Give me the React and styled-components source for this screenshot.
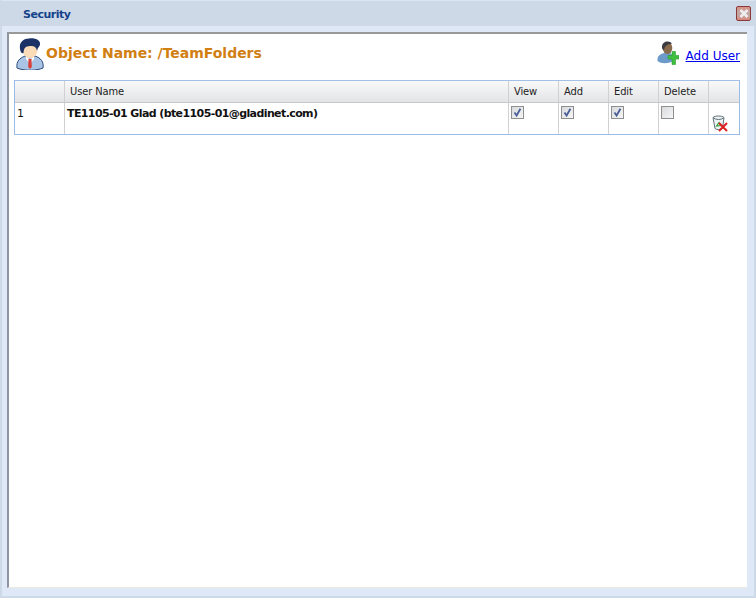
import React from "react";
import styled, { createGlobalStyle } from "styled-components";

const GlobalStyle = createGlobalStyle`
  html, body {
    margin: 0;
    padding: 0;
    background: #fff;
  }
`;

const Win = styled.div`
  width: 756px;
  height: 598px;
  box-sizing: border-box;
  display: flex;
  flex-direction: column;
  background: #dfe8f6;
  border-top: 1px solid #dbe4ef;
  border-left: 2px solid #cdd9e6;
  border-right: 2px solid #cdd9e6;
  border-bottom: 2px solid #cdd9e6;
  overflow: hidden;
`;

const TitleBar = styled.div`
  height: 25px;
  margin: 0 -2px;
  padding: 0 5px 0 23px;
  flex-shrink: 0;
  display: flex;
  align-items: center;
  justify-content: space-between;
  background: #cdd9e7;
`;

const Title = styled.span`
  font: bold 11px "DejaVu Sans", Verdana, sans-serif;
  letter-spacing: -0.5px;
  color: #15428b;
  position: relative;
  top: 1px;
`;

const CloseBtn = styled.button`
  width: 15px;
  height: 15px;
  padding: 0;
  border: 1px solid #8a3a3a;
  border-radius: 2px;
  background: linear-gradient(#dc8f82, #c3a6a2 35%, #c3a6a2 65%, #d8867a);
  display: flex;
  align-items: center;
  justify-content: center;
`;

const Body = styled.div`
  flex: 1;
  margin: 6px 7px 8px 5px;
  background: #fff;
  border-top: 2px solid #999;
  border-left: 2px solid #8f95a0;
  border-bottom: 1px solid #ece9e0;
  padding: 0 6px 0 5px;
  display: flex;
  flex-direction: column;
`;

const Head = styled.div`
  height: 46px;
  display: flex;
  align-items: flex-start;
  justify-content: space-between;
`;

const NameBox = styled.div`
  display: flex;
  align-items: center;
  gap: 2px;
  padding: 4px 0 0 2px;
`;

const ObjectName = styled.h1`
  margin: 0;
  font: bold 14px "DejaVu Sans", Verdana, sans-serif;
  letter-spacing: -0.02px;
  color: #d17f13;
  position: relative;
  top: -1px;
`;

const AddBox = styled.div`
  display: flex;
  align-items: flex-end;
  gap: 7px;
  padding-top: 7px;
  margin-right: 1px;
`;

const AddLink = styled.a`
  margin-bottom: 2px;
  font: 12px "DejaVu Sans", Verdana, sans-serif;
  color: #0000ee;
  text-decoration: underline;
`;

const Table = styled.table`
  width: 726px;
  table-layout: fixed;
  border-collapse: separate;
  border-spacing: 0;
  border: 1px solid #99bbe8;
  border-top-color: #a3c0e6;
`;

const Th = styled.th`
  height: 22px;
  padding: 0 0 0 5px;
  box-sizing: border-box;
  text-align: left;
  font: normal 11px "DejaVu Sans Condensed", "DejaVu Sans", sans-serif;
  letter-spacing: -0.1px;
  color: #222;
  border-right: 1px solid #d0d0d0;
  border-bottom: 1px solid #c8c8c8;
  background: linear-gradient(#f9f9f9, #e3e4e6);
  &:last-child {
    border-right: none;
  }
`;

const Td = styled.td`
  height: 31px;
  padding: ${(p) => (p.$icon ? "12px 0 0 3px" : p.$check ? "3px 0 0 2px" : "4px 0 0 2px")};
  box-sizing: border-box;
  vertical-align: top;
  border-right: 1px solid #d0d0d0;
  color: #111;
  font: ${(p) => (p.$bold ? "bold 11px" : "11px")} "DejaVu Sans", Verdana, sans-serif;
  letter-spacing: ${(p) => (p.$bold ? "-0.6px" : "0")};
  svg {
    display: block;
  }
  &:last-child {
    border-right: none;
  }
`;

const Box = styled.span`
  display: block;
  width: 11px;
  height: 11px;
  border: 1px solid #8e8f8f;
  background: linear-gradient(135deg, #d9dadd, #f6f6f6);
`;

const Check = ({ on }) => (
  <Box>
    {on && (
      <svg width="11" height="11" viewBox="0 0 11 11">
        <path d="M2.5 5.5 L4.6 8.5 L8.4 1.8" fill="none" stroke="#4a5f97" strokeWidth="1.8" />
      </svg>
    )}
  </Box>
);

const CloseIcon = () => (
  <svg width="10" height="9" viewBox="0 0 10 9">
    <path d="M1.5 1 L8.5 8 M8.5 1 L1.5 8" stroke="#eeeeee" strokeWidth="2.6" />
  </svg>
);

const PersonIcon = () => (
  <svg width="28" height="32" viewBox="0 0 28 32">
    <path d="M1 30 C0 23 4 20 9 18 L19 18 C25 20 28 24 27 30 C20 33 8 33 1 30Z" fill="#a9c4e4" stroke="#2b4a7d" strokeWidth="1" />
    <path d="M10 18 L14 22 L18 18 L18 21 L14 26 L10 21Z" fill="#fff" />
    <path d="M12.5 21 L15.5 21 L15.8 29 L14 31 L12.2 29Z" fill="#d8403a" />
    <ellipse cx="14" cy="12" rx="7.5" ry="8" fill="#fbdcb8" />
    <path d="M4.5 13 C2 5 7 0.5 13 0.5 C20 -0.5 26 3 23.5 8 C22.5 9.5 21.5 10 21 13 C20.5 9 18 7.5 14 8 C10 8.5 8 9 7.5 15 C6.5 15.5 5 15 4.5 13Z" fill="#1c3266" />
  </svg>
);

const AddUserIcon = () => (
  <svg width="22" height="24" viewBox="0 0 22 24">
    <path d="M0.5 20 C0 15 3 13 7 12 L13 12 C15 13 16 15 16 20 C11 23 4 23 0.5 20Z" fill="#6d9bc9" />
    <ellipse cx="10.5" cy="7" rx="4.8" ry="6" fill="#8a6a4c" />
    <path d="M5 7 C4.5 2 8 0.5 10.5 0.5 C13 0.5 15 1.5 14.5 3 C11 3 8 4 7 9 C6 9 5.5 8 5 7Z" fill="#3a3a40" />
    <path d="M11 14.5 H15 V10.5 H18.5 V14.5 H22 V18 H18.5 V23.5 H15 V18 H11Z" fill="#3fbf3f" stroke="#2c9c33" strokeWidth="0.6" />
  </svg>
);

const DeleteIcon = () => (
  <svg width="16" height="17" viewBox="0 0 16 17">
    <path d="M1 2.5 C3 0.5 10 0.5 12 2.5 L10.5 13.5 C8 15 5 15 3 13.5Z" fill="#eef3f5" stroke="#5f7078" strokeWidth="1" />
    <path d="M1.5 3 C4 5 9 5 11.5 3" fill="none" stroke="#5f7078" strokeWidth="1" />
    <path d="M4.5 11 L7 7.5 L9 10.5Z" fill="none" stroke="#2fa53a" strokeWidth="1.2" />
    <path d="M7 8 L15 16 M15 8 L7 16" stroke="#dd2020" strokeWidth="2" />
  </svg>
);

const columns = [
  { label: "", width: 50 },
  { label: "User Name", width: 444 },
  { label: "View", width: 50 },
  { label: "Add", width: 50 },
  { label: "Edit", width: 50 },
  { label: "Delete", width: 50 },
  { label: "", width: 30 },
];

const App = () => {
  return (
    <Win>
      <GlobalStyle />
      <TitleBar>
        <Title>Security</Title>
        <CloseBtn>
          <CloseIcon />
        </CloseBtn>
      </TitleBar>
      <Body>
        <Head>
          <NameBox>
            <PersonIcon />
            <ObjectName>Object Name: /TeamFolders</ObjectName>
          </NameBox>
          <AddBox>
            <AddUserIcon />
            <AddLink href="#">Add User</AddLink>
          </AddBox>
        </Head>
        <Table>
          <colgroup>
            {columns.map((c, i) => (
              <col key={i} width={c.width} />
            ))}
          </colgroup>
          <thead>
            <tr>
              {columns.map((c, i) => (
                <Th key={i}>{c.label}</Th>
              ))}
            </tr>
          </thead>
          <tbody>
            <tr>
              <Td>1</Td>
              <Td $bold>TE1105-01 Glad (bte1105-01@gladinet.com)</Td>
              <Td $check><Check on /></Td>
              <Td $check><Check on /></Td>
              <Td $check><Check on /></Td>
              <Td $check><Check /></Td>
              <Td $icon><DeleteIcon /></Td>
            </tr>
          </tbody>
        </Table>
      </Body>
    </Win>
  );
};

export default App;
